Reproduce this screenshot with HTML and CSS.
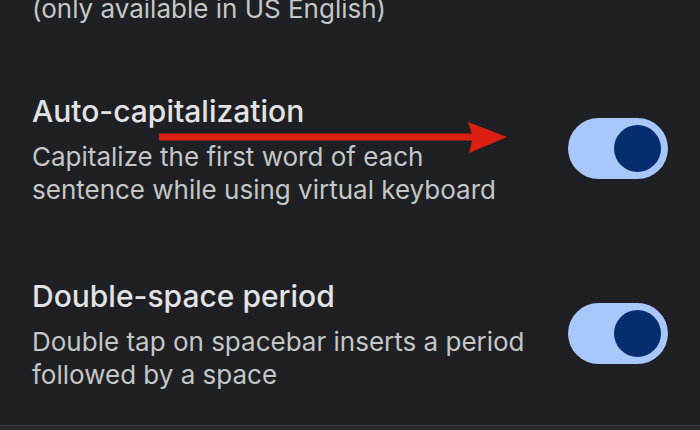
FILE: index.html
```html
<!DOCTYPE html>
<html lang="en">
<head>
<meta charset="utf-8">
<link rel="stylesheet" href="styles.css">
</head>
<body>
<div class="screen">
  <div class="list">
    <div class="row row-partial">
      <div class="text">
        <div class="sub">(only available in US English)</div>
      </div>
    </div>
    <div class="row">
      <div class="text">
        <div class="title">Auto-capitalization</div>
        <div class="sub">Capitalize the first word of each<br>sentence while using virtual keyboard</div>
      </div>
      <div class="switch"><span class="knob"></span></div>
    </div>
    <div class="row">
      <div class="text">
        <div class="title">Double-space period</div>
        <div class="sub">Double tap on spacebar inserts a period<br>followed by a space</div>
      </div>
      <div class="switch"><span class="knob"></span></div>
    </div>
  </div>
  <div class="bottom-edge"></div>
  <svg class="arrow" width="360" height="40" viewBox="0 0 360 40">
    <rect x="0" y="13.5" width="316" height="7" fill="#dc1f12"/>
    <polygon points="309,2 348,17 310,33 314,17" fill="#dc1f12"/>
  </svg>
</div>
</body>
</html>
```

FILE: styles.css
```css
html, body {
  margin: 0;
  padding: 0;
}
body {
  background: #1f2023;
  width: 700px;
  height: 430px;
  overflow: hidden;
  font-family: Inter, Roboto, "Liberation Sans", sans-serif;
}
.screen {
  position: relative;
  width: 700px;
  height: 430px;
  display: flex;
  flex-direction: column;
}
.list {
  flex: 1;
  margin-top: -8px;
  display: flex;
  flex-direction: column;
}
.row {
  display: flex;
  align-items: center;
  justify-content: space-between;
  padding: 0 32px;
}
.row-partial {
  padding-bottom: 66px;
}
.row:nth-child(2) {
  padding-bottom: 70px;
}
.title {
  color: #e3e3e3;
  font-size: 30px;
  font-weight: 500;
  line-height: 40px;
  margin-bottom: 9px;
}
.sub {
  color: #c4c7c5;
  font-size: 26px;
  line-height: 33px;
}
.switch {
  width: 100px;
  height: 61px;
  border-radius: 31px;
  background: #a8c7fa;
  display: flex;
  align-items: center;
  justify-content: flex-end;
  padding-right: 7px;
  box-sizing: border-box;
  flex-shrink: 0;
}
.knob {
  width: 47px;
  height: 47px;
  border-radius: 50%;
  background: #062e6f;
}
.bottom-edge {
  height: 4px;
  border-top: 1px solid #3b3c3f;
  background: #27282b;
}
.arrow {
  position: absolute;
  left: 159px;
  top: 120px;
}
```
